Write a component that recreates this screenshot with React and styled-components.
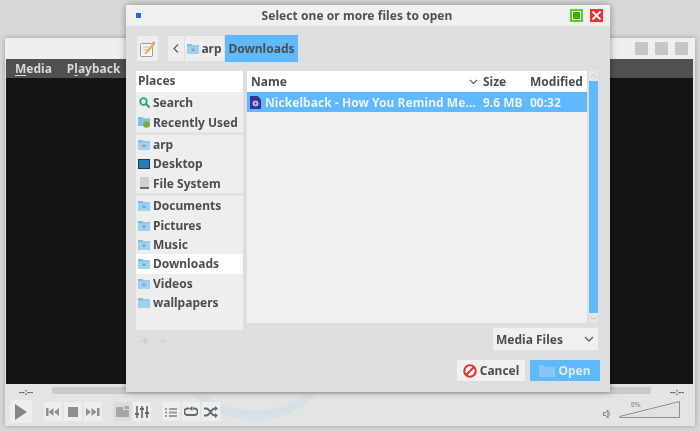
import React from "react";
import styled, { createGlobalStyle } from "styled-components";

const Global = createGlobalStyle`
  html, body { margin: 0; padding: 0; width: 700px; height: 431px; overflow: hidden; background: #d8d8d8; }
  #root { width: 700px; height: 431px; }
  * { box-sizing: border-box; }
`;

const Desktop = styled.div`
  position: relative;
  width: 700px;
  height: 431px;
  overflow: hidden;
  background: #d8d8d8;
  font-family: "Noto Sans", "Open Sans", sans-serif;
  font-weight: 700;
  color: #4a4d52;
  filter: blur(0.45px);
`;

/* ---------- background player window ---------- */
const PlayerWindow = styled.div`
  position: absolute;
  left: 5px;
  top: 38px;
  width: 690px;
  height: 388px;
  display: flex;
  flex-direction: column;
  background: #e4e4e4;
  box-shadow: 0 0 5px rgba(0, 0, 0, 0.28);
`;
const PlayerTitle = styled.div`
  height: 21px;
  flex: none;
  background: #efefef;
  display: flex;
  justify-content: flex-end;
  align-items: center;
  gap: 7px;
  padding: 0 7px 1px 0;
`;
const TitleSquare = styled.div`
  width: 13px;
  height: 13px;
  background: #c6c6c6;
`;
const VideoFrame = styled.div`
  flex: 1;
  margin: 0 2px 0 1px;
  display: flex;
  flex-direction: column;
  background: #141414;
`;
const MenuBar = styled.div`
  height: 19px;
  background: #505050;
  display: flex;
  gap: 15px;
  padding-left: 9px;
  color: #d8d8d8;
  font-size: 12px;
  line-height: 19px;
  u { text-decoration-thickness: 1px; text-underline-offset: 2px; }
`;
const Controls = styled.div`
  position: relative;
  height: 42px;
  flex: none;
  display: flex;
  flex-direction: column;
  overflow: hidden;
`;
const Swirl = styled.svg`
  position: absolute;
  left: 170px;
  top: -10px;
  width: 160px;
  height: 60px;
`;
const SeekRow = styled.div`
  position: relative;
  display: flex;
  align-items: center;
  height: 15px;
  padding: 0 8px 0 11px;
  gap: 16px;
`;
const TimeLabel = styled.span`
  font-size: 9px;
  line-height: 12px;
  width: 20px;
  text-align: center;
  color: #55585c;
`;
const SeekBar = styled.div`
  flex: 1;
  height: 7px;
  margin-top: -3px;
  border-radius: 2px;
  background: #c9c9c9;
`;
const ButtonRow = styled.div`
  position: relative;
  display: flex;
  align-items: center;
  height: 25px;
  padding-left: 5px;
`;
const Group = styled.div`
  display: flex;
  gap: 2px;
  margin-left: ${(p) => p.$gap || 0}px;
`;
const CtrlButton = styled.div`
  width: ${(p) => (p.$big ? 22 : 18)}px;
  height: ${(p) => (p.$big ? 23 : 19)}px;
  display: flex;
  align-items: center;
  justify-content: center;
  background: ${(p) => (p.$dim ? "#dcdcdc" : "#eeeeee")};
`;
const VolumeBox = styled.div`
  position: absolute;
  right: 14px;
  top: 1px;
  display: flex;
  align-items: flex-end;
  gap: 7px;
`;
const VolumeWrap = styled.div`
  position: relative;
  width: 63px;
  height: 19px;
`;
const VolumeText = styled.span`
  position: absolute;
  left: 13px;
  top: 0;
  font-size: 6.5px;
  line-height: 9px;
  color: #9a9a9a;
`;

/* ---------- dialog ---------- */
const Dialog = styled.div`
  position: absolute;
  left: 126px;
  top: 5px;
  width: 484px;
  height: 387px;
  display: flex;
  flex-direction: column;
  background: #dedede;
  box-shadow: 0 0 7px rgba(0, 0, 0, 0.38);
`;
const DialogTitle = styled.div`
  position: relative;
  flex: none;
  height: 21px;
  background: #eff0f1;
  display: flex;
  align-items: center;
  justify-content: center;
  font-size: 12px;
  letter-spacing: 0.05px;
  color: #4d5055;
  padding-right: 22px;
`;
const AppDot = styled.div`
  position: absolute;
  left: 10px;
  top: 8px;
  width: 5px;
  height: 5px;
  background: #2d62e6;
`;
const WinButtons = styled.div`
  position: absolute;
  right: 7px;
  top: 4px;
  display: flex;
  gap: 7px;
`;
const MaxButton = styled.div`
  width: 13px;
  height: 13px;
  border: 2px solid #58cf1c;
  background: #fff;
  padding: 1px;
  &::after { content: ""; display: block; width: 100%; height: 100%; background: #3cae14; }
`;
const CloseButton = styled.div`
  width: 13px;
  height: 13px;
  background: #ea3232;
  display: flex;
  align-items: center;
  justify-content: center;
`;
const DialogBody = styled.div`
  flex: 1;
  display: flex;
  flex-direction: column;
  padding: 9px 12px 10px 10px;
`;
const PathBar = styled.div`
  display: flex;
  align-items: center;
  height: 27px;
  margin-bottom: 9px;
`;
const PathButton = styled.div`
  height: ${(p) => (p.$active ? 27 : 25)}px;
  display: flex;
  align-items: center;
  justify-content: center;
  gap: 2px;
  font-size: 12px;
  margin-left: ${(p) => p.$gap || 0}px;
  width: ${(p) => p.$w}px;
  background: ${(p) => (p.$active ? "#60b9fe" : "#eeeeee")};
  color: #4a4d52;
`;
const Panes = styled.div`
  display: flex;
  gap: 4px;
  height: 310px;
`;
const PlacesColumn = styled.div`
  width: 107px;
  flex: none;
  display: flex;
  flex-direction: column;
`;
const Places = styled.div`
  height: 259px;
  flex: none;
  background: #eeeeee;
  font-size: 12px;
`;
const PlacesHeader = styled.div`
  height: 21px;
  margin-bottom: 1px;
  background: #fff;
  padding-left: 2px;
  line-height: 20px;
`;
const PlaceRow = styled.div`
  height: 19.4px;
  display: flex;
  align-items: center;
  gap: 3px;
  padding-left: 2px;
  line-height: 19px;
  background: ${(p) => (p.$on ? "#fff" : "transparent")};
  white-space: nowrap;
`;
const PlaceIcon = styled.span`
  width: 12px;
  height: 12px;
  flex: none;
  display: flex;
  align-items: center;
  justify-content: center;
`;
const PlaceGap = styled.div`
  height: 3px;
  background: #e3e3e3;
`;
const AddRemove = styled.div`
  display: flex;
  gap: 9px;
  padding-left: 5px;
  height: 20px;
  align-items: center;
  font-size: 14px;
  color: #cfcfcf;
`;
const RightColumn = styled.div`
  flex: 1;
  display: flex;
  flex-direction: column;
  min-width: 0;
`;
const ListArea = styled.div`
  display: flex;
  gap: 2px;
  height: 252px;
  flex: none;
`;
const FileList = styled.div`
  flex: 1;
  background: #f0f0f0;
  font-size: 12px;
`;
const ListHeader = styled.div`
  height: 21px;
  background: #fff;
  display: flex;
  align-items: center;
`;
const FileRow = styled.div`
  height: 20px;
  background: #60b9fe;
  color: #e9f3fb;
  display: flex;
  align-items: center;
`;
const NameCell = styled.div`
  width: 217px;
  flex: none;
  display: flex;
  align-items: center;
  gap: ${(p) => (p.$wide ? 4 : 3)}px;
  padding-left: ${(p) => p.$pad}px;
  white-space: nowrap;
  letter-spacing: ${(p) => (p.$wide ? "0.06px" : "0")};
`;
const Caret = styled.div`
  width: 18px;
  flex: none;
  display: flex;
  justify-content: flex-end;
  padding-right: 4px;
`;
const SizeCell = styled.div`
  width: 47px;
  flex: none;
  padding-left: 1px;
`;
const ModCell = styled.div`
  flex: 1;
  white-space: nowrap;
  padding-left: 1px;
`;
const Scroll = styled.div`
  width: 9px;
  flex: none;
  display: flex;
  flex-direction: column;
  align-items: center;
  background: #e6e6e6;
`;
const ScrollEnd = styled.div`
  height: 10px;
  display: flex;
  align-items: center;
  justify-content: center;
`;
const Thumb = styled.div`
  flex: 1;
  width: 9px;
  background: #60b9fe;
`;
const ComboRow = styled.div`
  display: flex;
  justify-content: flex-end;
  margin-top: 5px;
`;
const Combo = styled.div`
  width: 105px;
  height: 22px;
  flex: none;
  background: #f0f0f0;
  display: flex;
  align-items: center;
  justify-content: space-between;
  padding: 0 4px 0 3px;
  font-size: 12px;
`;
const ActionRow = styled.div`
  display: flex;
  justify-content: flex-end;
  gap: 5px;
  margin-top: 10px;
  margin-right: -2px;
`;
const ActionButton = styled.div`
  width: ${(p) => p.$w}px;
  height: 21px;
  display: flex;
  align-items: center;
  justify-content: center;
  gap: 3px;
  font-size: 12px;
  background: ${(p) => (p.$primary ? "#60b9fe" : "#f1f1f1")};
  color: ${(p) => (p.$primary ? "#d9eefc" : "#4a4d52")};
`;

/* ---------- icons ---------- */
const Folder = ({ c = "#7fbde6", mark }) => (
  <svg width="12" height="11" viewBox="0 0 12 11">
    <path d="M0 1h4.500l1 1.300H12V11H0z" fill={c} />
    <path d="M0 3.300h12V11H0z" fill="#a3d0ee" />
    {mark && <rect x="4.500" y="5.500" width="3" height="2.500" fill="#6ba6d6" />}
  </svg>
);
const Chevron = ({ w = 9, c = "#5a5d60" }) => (
  <svg width={w} height={w * 0.6} viewBox="0 0 10 6">
    <path d="M1 1l4 4 4-4" fill="none" stroke={c} strokeWidth="1.300" />
  </svg>
);
const Ic = ({ children, w = 14, h = 12 }) => (
  <svg width={w} height={h} viewBox={`0 0 ${w} ${h}`}>{children}</svg>
);
const G = "#8d9093";

export default function App() {
  return (
    <Desktop>
      <Global />
      <PlayerWindow>
        <PlayerTitle>
          <TitleSquare />
          <TitleSquare />
          <TitleSquare />
        </PlayerTitle>
        <VideoFrame>
          <MenuBar>
            <span><u>M</u>edia</span>
            <span>P<u>l</u>ayback</span>
          </MenuBar>
        </VideoFrame>
        <Controls>
          <Swirl viewBox="0 0 160 60">
            <path d="M18 14C45 50 115 50 140 14" fill="none" stroke="#d6e0e6" strokeWidth="9" />
          </Swirl>
          <SeekRow>
            <TimeLabel>--:--</TimeLabel>
            <SeekBar />
            <TimeLabel>--:--</TimeLabel>
          </SeekRow>
          <ButtonRow>
            <CtrlButton $big>
              <svg width="12" height="16" viewBox="0 0 12 16"><path d="M0 0l12 8L0 16z" fill="#84888a" /></svg>
            </CtrlButton>
            <Group $gap={12}>
              <CtrlButton>
                <Ic><path d="M0 2h2.500v8H0zM7.500 2v8L2.500 6zM13 2v8L8 6z" fill={G} /></Ic>
              </CtrlButton>
              <CtrlButton>
                <Ic w={10} h={10}><rect width="10" height="10" fill={G} /></Ic>
              </CtrlButton>
              <CtrlButton>
                <Ic><path d="M0 2v8l5-4zM5.500 2v8l5-4zM11 2h2.500v8H11z" fill={G} /></Ic>
              </CtrlButton>
            </Group>
            <Group $gap={11}>
              <CtrlButton $dim>
                <Ic w={13} h={11}><path d="M0 1h7v3h6v7H0z" fill="#a4a6a8" /><rect x="8.500" y="0" width="4.500" height="3" fill="#a4a6a8" /></Ic>
              </CtrlButton>
              <CtrlButton>
                <Ic><path d="M2 0v12M7 0v12M12 0v12" stroke="#62676b" strokeWidth="1.600" /><path d="M0 8h4M5 3h4M10 7h4" stroke="#62676b" strokeWidth="2" /></Ic>
              </CtrlButton>
            </Group>
            <Group $gap={11}>
              <CtrlButton>
                <Ic w={12} h={10}><path d="M0 1h2v2H0zM4 1h8v2H4zM0 4.500h2v2H0zM4 4.500h8v2H4zM0 8h2v2H0zM4 8h8v2H4z" fill="#9a9c9e" /></Ic>
              </CtrlButton>
              <CtrlButton>
                <Ic><path d="M9 2.500h1.500a3 3 0 0 1 0 6.500H3.500a3 3 0 0 1 0-6.500H5" fill="none" stroke="#5f6a6f" strokeWidth="1.800" /><path d="M8.500 0v5L5 2.500z" fill="#5f6a6f" /></Ic>
              </CtrlButton>
              <CtrlButton>
                <Ic><path d="M0 2.500h2.500c3 0 5 7 8 7H12M0 9.500h2.500c3 0 5-7 8-7H12" fill="none" stroke="#4f6a78" strokeWidth="1.800" /><path d="M11 0l3 2.500L11 5zM11 7l3 2.500L11 12z" fill="#4f6a78" /></Ic>
              </CtrlButton>
            </Group>
            <VolumeBox>
              <svg width="8" height="10" viewBox="0 0 8 10">
                <path d="M.5 3.500h2L5 1v8L2.500 6.500h-2z" fill="none" stroke="#777" />
                <path d="M6.500 3.500v3" stroke="#6ba4d4" />
              </svg>
              <VolumeWrap>
                <VolumeText>0%</VolumeText>
                <svg width="63" height="19" viewBox="0 0 63 19">
                  <path d="M1.500 16.500L61.500 1.500v16H3q-2 0-1.500-1z" fill="#e2e2e2" stroke="#8f8f8f" />
                </svg>
              </VolumeWrap>
            </VolumeBox>
          </ButtonRow>
        </Controls>
      </PlayerWindow>

      <Dialog>
        <DialogTitle>
          <AppDot />
          Select one or more files to open
          <WinButtons>
            <MaxButton />
            <CloseButton>
              <svg width="11" height="11" viewBox="0 0 11 11"><path d="M1.500 1.500l8 8M9.500 1.500l-8 8" stroke="#fff" strokeWidth="1.800" /></svg>
            </CloseButton>
          </WinButtons>
        </DialogTitle>
        <DialogBody>
          <PathBar>
            <PathButton $w={21} $gap={1}>
              <svg width="15" height="16" viewBox="0 0 15 16">
                <rect x=".5" y="2.500" width="12" height="13" rx="1" fill="#f4f4f4" stroke="#9a9a9a" />
                <path d="M3 6h6M3 9h5" stroke="#bdbdbd" />
                <path d="M5 11l8-9 2 1.500-8 9-2.500 1z" fill="#e9b24c" />
                <path d="M12.500 1.500l1-1 1.500 1.500-1 1z" fill="#e05050" />
              </svg>
            </PathButton>
            <PathButton $w={16} $gap={10}>
              <svg width="6" height="9" viewBox="0 0 6 9"><path d="M5 .5l-4 4 4 4" fill="none" stroke="#5a5d60" strokeWidth="1.200" /></svg>
            </PathButton>
            <PathButton $w={39} $gap={1}><Folder mark />arp</PathButton>
            <PathButton $w={73} $gap={1} $active>Downloads</PathButton>
          </PathBar>
          <Panes>
            <PlacesColumn>
              <Places>
                <PlacesHeader>Places</PlacesHeader>
                <PlaceRow>
                  <PlaceIcon>
                    <svg width="11" height="11" viewBox="0 0 11 11"><circle cx="4.500" cy="4.500" r="3.300" fill="none" stroke="#2aa08c" strokeWidth="1.800" /><path d="M7 7l3.500 3.500" stroke="#2aa08c" strokeWidth="2" /></svg>
                  </PlaceIcon>Search
                </PlaceRow>
                <PlaceRow>
                  <PlaceIcon>
                    <svg width="12" height="12" viewBox="0 0 12 12"><path d="M0 1h4.500l1 1.300H12V10H0z" fill="#86bfe6" /><circle cx="8.500" cy="8.500" r="3.300" fill="#7fa82c" /></svg>
                  </PlaceIcon>Recently Used
                </PlaceRow>
                <PlaceGap />
                <PlaceRow><PlaceIcon><Folder mark /></PlaceIcon>arp</PlaceRow>
                <PlaceRow>
                  <PlaceIcon>
                    <svg width="12" height="10" viewBox="0 0 12 10"><rect width="12" height="10" fill="#24363f" /><rect x="1" y="1" width="10" height="8" fill="#1f7fba" /></svg>
                  </PlaceIcon>Desktop
                </PlaceRow>
                <PlaceRow>
                  <PlaceIcon>
                    <svg width="9" height="12" viewBox="0 0 9 12"><rect width="9" height="12" fill="#cfcfcf" /><rect y="10" width="9" height="2" fill="#6e6e6e" /></svg>
                  </PlaceIcon>File System
                </PlaceRow>
                <PlaceGap />
                <PlaceRow><PlaceIcon><Folder mark /></PlaceIcon>Documents</PlaceRow>
                <PlaceRow><PlaceIcon><Folder mark /></PlaceIcon>Pictures</PlaceRow>
                <PlaceRow><PlaceIcon><Folder mark /></PlaceIcon>Music</PlaceRow>
                <PlaceRow $on><PlaceIcon><Folder mark /></PlaceIcon>Downloads</PlaceRow>
                <PlaceRow><PlaceIcon><Folder mark /></PlaceIcon>Videos</PlaceRow>
                <PlaceRow><PlaceIcon><Folder /></PlaceIcon>wallpapers</PlaceRow>
              </Places>
              <AddRemove><span>+</span><span>−</span></AddRemove>
            </PlacesColumn>
            <RightColumn>
              <ListArea>
                <FileList>
                  <ListHeader>
                    <NameCell $pad={4}>Name</NameCell>
                    <Caret><Chevron /></Caret>
                    <SizeCell>Size</SizeCell>
                    <ModCell>Modified</ModCell>
                  </ListHeader>
                  <FileRow>
                    <NameCell $pad={3} $wide>
                      <svg width="11" height="13" viewBox="0 0 11 13" style={{ flex: "none" }}>
                        <path d="M0 0h7.500L11 3.500V13H0z" fill="#3b2f9a" />
                        <circle cx="5.500" cy="7.500" r="3" fill="#b9b4ea" />
                        <circle cx="5.500" cy="7.500" r="1" fill="#3b2f9a" />
                      </svg>
                      Nickelback - How You Remind Me...
                    </NameCell>
                    <Caret />
                    <SizeCell>9.6 MB</SizeCell>
                    <ModCell>00:32</ModCell>
                  </FileRow>
                </FileList>
                <Scroll>
                  <ScrollEnd><svg width="7" height="4" viewBox="0 0 7 4"><path d="M.5 3.500l3-3 3 3" fill="none" stroke="#c2c2c2" /></svg></ScrollEnd>
                  <Thumb />
                  <ScrollEnd><svg width="7" height="4" viewBox="0 0 7 4"><path d="M.5.500l3 3 3-3" fill="none" stroke="#c2c2c2" /></svg></ScrollEnd>
                </Scroll>
              </ListArea>
              <ComboRow>
                <Combo>Media Files<Chevron w={10} /></Combo>
              </ComboRow>
              <ActionRow>
                <ActionButton $w={68}>
                  <svg width="14" height="14" viewBox="0 0 13 13"><circle cx="6.500" cy="6.500" r="5.300" fill="#fff" stroke="#dd3333" strokeWidth="2" /><path d="M2.800 10.200l7.400-7.400" stroke="#dd3333" strokeWidth="2" /></svg>
                  Cancel
                </ActionButton>
                <ActionButton $w={70} $primary>
                  <svg width="16" height="12" viewBox="0 0 16 12"><path d="M0 0h5l1 2h10v10H0z" fill="#86c6f6" /></svg>
                  Open
                </ActionButton>
              </ActionRow>
            </RightColumn>
          </Panes>
        </DialogBody>
      </Dialog>
    </Desktop>
  );
}
